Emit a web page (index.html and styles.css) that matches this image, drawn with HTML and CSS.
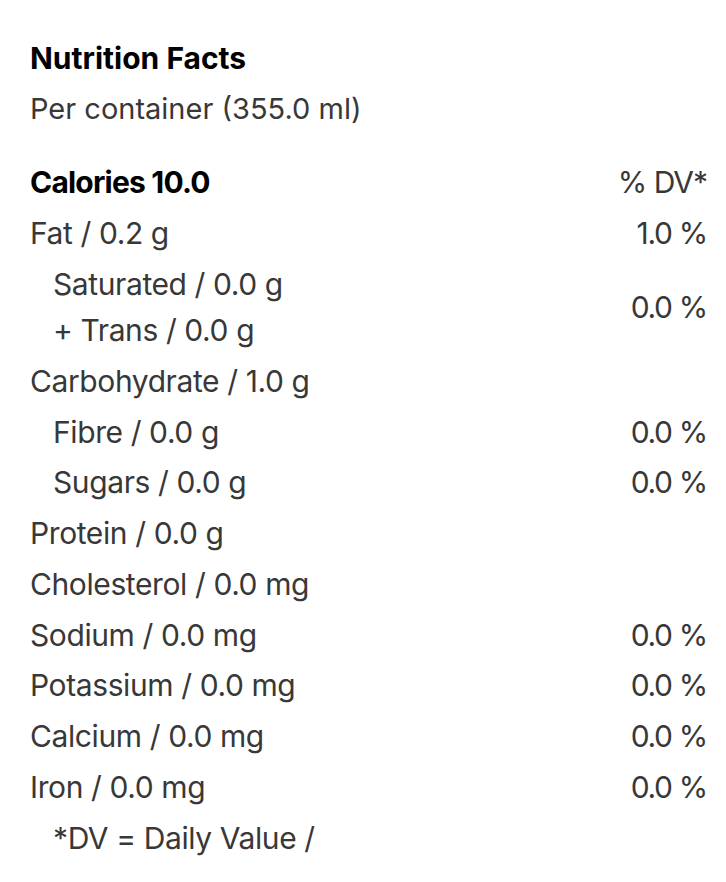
FILE: index.html
```html
<!DOCTYPE html>
<html>
<head>
<meta charset="utf-8">
<link rel="stylesheet" href="styles.css">
</head>
<body>
<section class="facts">
  <h1 class="title">Nutrition Facts</h1>
  <p class="serving">Per container (355.0 ml)</p>
  <div class="table">
    <div class="row head"><span class="cal">Calories 10.0</span><span class="dv">% DV*</span></div>
    <div class="row"><span>Fat / 0.2 g</span><span class="val">1.0 %</span></div>
    <div class="row group">
      <div class="sub-lines">
        <span class="sub">Saturated / 0.0 g</span>
        <span class="sub">+ Trans / 0.0 g</span>
      </div>
      <span class="val">0.0 %</span>
    </div>
    <div class="row"><span>Carbohydrate / 1.0 g</span><span></span></div>
    <div class="row"><span class="sub">Fibre / 0.0 g</span><span class="val">0.0 %</span></div>
    <div class="row"><span class="sub">Sugars / 0.0 g</span><span class="val">0.0 %</span></div>
    <div class="row"><span>Protein / 0.0 g</span><span></span></div>
    <div class="row"><span>Cholesterol / 0.0 mg</span><span></span></div>
    <div class="row"><span>Sodium / 0.0 mg</span><span class="val">0.0 %</span></div>
    <div class="row"><span>Potassium / 0.0 mg</span><span class="val">0.0 %</span></div>
    <div class="row"><span>Calcium / 0.0 mg</span><span class="val">0.0 %</span></div>
    <div class="row"><span>Iron / 0.0 mg</span><span class="val">0.0 %</span></div>
    <div class="row"><span class="sub">*DV = Daily Value /</span></div>
  </div>
</section>
</body>
</html>
```
FILE: styles.css
```css
html, body {
  margin: 0;
  padding: 0;
  background: #fff;
}
body {
  font-family: Inter, "Noto Sans", sans-serif;
  color: #383838;
  font-size: 29px;
}
.facts {
  padding: 39px 19px 0 30px;
}
.title {
  margin: 0;
  font-size: 30px;
  font-weight: 700;
  color: #000;
  line-height: 38px;
}
.serving {
  margin: 14px 0 0 0;
  line-height: 36px;
}
.table {
  margin-top: 30px;
}
.row {
  display: flex;
  justify-content: space-between;
  align-items: center;
  height: 50.75px;
  font-size: 30px;
  letter-spacing: -0.4px;
}
.row.head .cal {
  font-weight: 700;
  color: #000;
  letter-spacing: -0.8px;
}
.dv {
  letter-spacing: -1px;
}
.val {
  letter-spacing: -1.3px;
}
.row.group {
  height: 97px;
}
.sub-lines {
  display: flex;
  flex-direction: column;
  gap: 10px;
}
.sub {
  padding-left: 23px;
}
```
